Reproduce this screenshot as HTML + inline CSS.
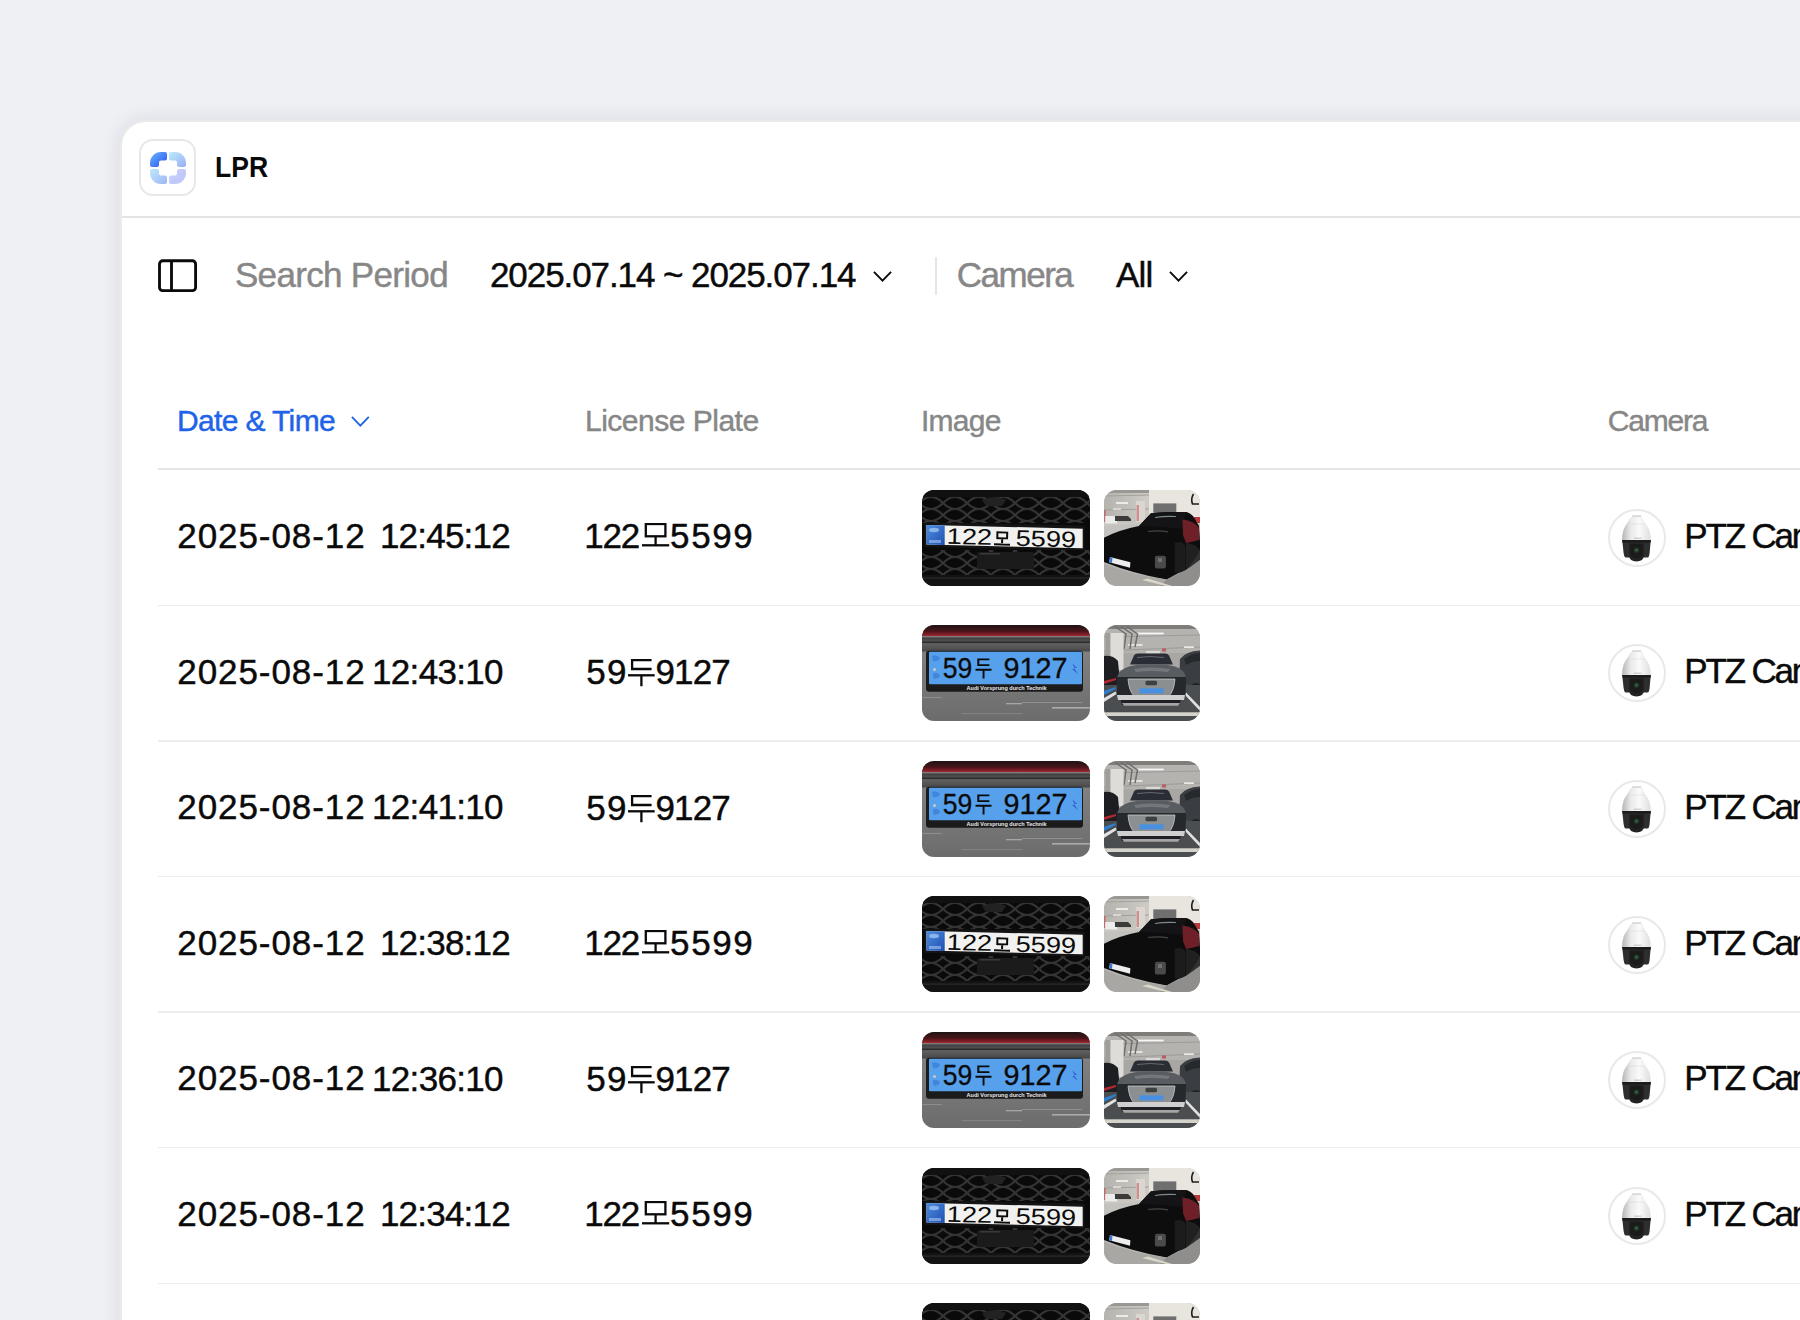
<!DOCTYPE html>
<html><head><meta charset="utf-8"><title>LPR</title>
<style>
html,body{margin:0;padding:0}
body{width:1800px;height:1320px;overflow:hidden;background:#eff0f4;position:relative;font-family:"Liberation Sans",sans-serif}
.abs{position:absolute;display:block}
.t{position:absolute;white-space:nowrap;-webkit-text-stroke:0.45px currentColor}
#win{position:absolute;left:120px;top:120px;width:1760px;height:1300px;background:#fff;border:2px solid #eaeaea;border-radius:26px;box-shadow:0 0 18px 3px rgba(20,30,60,0.075)}
.hline{position:absolute;left:122px;width:1700px;height:1.6px;background:#e4e4e4}
#logo{position:absolute;left:139.2px;top:139.2px;width:53px;height:53px;border:2px solid #e8e8e8;border-radius:14px;background:#fff}
.th{position:absolute;overflow:hidden;border-radius:12px}
.th svg{display:block}
.camc{position:absolute;left:1608px;width:54px;height:54px;border:2px solid #e9e9e9;border-radius:50%;overflow:hidden;background:#fff}
.camc svg{position:absolute;left:-2px;top:-2px}
</style></head><body>
<svg width="0" height="0" style="position:absolute"><defs>
<pattern id="hc" width="24" height="12" patternUnits="userSpaceOnUse" x="-3" y="7">
<path d="M0,6 Q6,0 12,0 Q18,0 24,6 M0,6 Q6,12 12,12 Q18,12 24,6" fill="none" stroke="#343434" stroke-width="2.1"/>
</pattern>
<linearGradient id="blueband" x1="0" y1="0" x2="1" y2="1"><stop offset="0" stop-color="#4d8ee0"/><stop offset="1" stop-color="#1f4fb0"/></linearGradient>
<linearGradient id="redtop" x1="0" y1="0" x2="0" y2="1"><stop offset="0" stop-color="#1e1213"/><stop offset="0.55" stop-color="#4a1519"/><stop offset="0.85" stop-color="#8a1f28"/><stop offset="1" stop-color="#b0303a"/></linearGradient>
<linearGradient id="bodyB" x1="0" y1="0" x2="0" y2="1"><stop offset="0" stop-color="#3a3a3a"/><stop offset="0.5" stop-color="#5f5f5f"/><stop offset="1" stop-color="#474747"/></linearGradient>
<linearGradient id="lowB" x1="0" y1="0" x2="0" y2="1"><stop offset="0" stop-color="#8a8a8a"/><stop offset="0.5" stop-color="#7a7a7a"/><stop offset="1" stop-color="#6c6c6c"/></linearGradient>
<linearGradient id="ceilA" x1="0" y1="0" x2="1" y2="0"><stop offset="0" stop-color="#b5b3ae"/><stop offset="1" stop-color="#cfccc6"/></linearGradient>
<linearGradient id="ceilB" x1="0" y1="0" x2="0" y2="1"><stop offset="0" stop-color="#8f8f8c"/><stop offset="0.5" stop-color="#c4c3bf"/><stop offset="1" stop-color="#b1b0ad"/></linearGradient>
<radialGradient id="domeg" cx="0.45" cy="0.35" r="0.7"><stop offset="0" stop-color="#ffffff"/><stop offset="0.7" stop-color="#f0f0f0"/><stop offset="1" stop-color="#c9c9c9"/></radialGradient>

<symbol id="plateA" viewBox="0 0 168 96">
<rect width="168" height="96" fill="#0a0a0a"/>
<rect y="0" width="168" height="7" fill="#111"/>
<rect y="7" width="168" height="26" fill="url(#hc)"/>
<rect y="60" width="168" height="26" fill="url(#hc)"/>
<path d="M60,10 Q72,4 84,10 L80,16 L64,16Z" fill="#222"/>
<polygon points="2.5,32.5 162.5,35.5 162.5,60.5 2.5,57" fill="#141414"/>
<polygon points="4.5,35 160.7,38.7 160.7,58.3 4.5,54.5" fill="#f1f1ef"/>
<polygon points="4.5,35 22.7,35.4 22.7,55 4.5,54.5" fill="url(#blueband)"/>
<ellipse cx="12" cy="40" rx="5" ry="2.2" fill="#9cc4f0" opacity="0.8"/>
<rect x="7" y="50" width="12" height="3" fill="#a8c6f0" opacity="0.6"/>
<g transform="rotate(1.45 4.5 35)" fill="#0b0b0b">
<text x="25" y="53.3" font-family="Liberation Sans" font-size="22.5" textLength="45.5" lengthAdjust="spacingAndGlyphs">122</text>
<path d="M74.6,39.6 H86.4 V47.2 H74.6 Z M76.6,41.4 V45.4 H84.4 V41.4 Z M79.5,47.2 H81.5 V52 H79.5 Z M72.5,51.6 H88.5 V53.6 H72.5 Z" fill-rule="evenodd"/>
<text x="94" y="53.6" font-family="Liberation Sans" font-size="22.5" textLength="60.5" lengthAdjust="spacingAndGlyphs">5599</text>
</g>
<rect x="55" y="62" width="57" height="17" rx="1.5" fill="#1b1b1b"/>
<rect x="58" y="63" width="20" height="1.5" fill="#3a3a3a"/>
<rect y="85" width="168" height="11" fill="#131313"/>
<rect y="87.5" width="168" height="1.2" fill="#2c2c2c"/>
</symbol>

<symbol id="plateB" viewBox="0 0 168 96">
<rect width="168" height="96" fill="url(#lowB)"/>
<rect y="0" width="168" height="11.5" fill="url(#redtop)"/>
<rect y="11.5" width="168" height="15" fill="url(#bodyB)"/><rect y="11.3" width="168" height="1" fill="#8e8e8e"/>
<rect y="16.5" width="168" height="1.5" fill="#2b2b2b"/>
<rect x="4" y="25.8" width="157" height="41" rx="3" fill="#1b1b1b"/>
<rect x="7" y="26.8" width="153" height="32.4" rx="1" fill="#57a0ec"/>
<path d="M10,31 q5,-2 8,2 q-2,4 -7,3z M11,48 q5,-1 7,3 q-3,4 -7,2z" fill="#3a7fd8" opacity="0.8"/>
<circle cx="12.5" cy="44.5" r="1.5" fill="#c8c8c8"/>
<path d="M150,38 l5,5 l-3,0 l4,6 l-6,-5 l3,0 z" fill="#2a63d6"/>
<g fill="#0b0b0b">
<text x="20.8" y="53.3" font-family="Liberation Sans" font-size="29" textLength="29.5" lengthAdjust="spacingAndGlyphs" stroke="#0b0b0b" stroke-width="0.3">59</text>
<path d="M55.3,33.4 H67.4 V35.2 H57.3 V39.2 H67.4 V41 H55.3 Z M53.5,43.8 H69.5 V45.7 H53.5 Z M60.6,45.7 H62.5 V53.5 H60.6 Z"/>
<text x="81.5" y="53.3" font-family="Liberation Sans" font-size="29" textLength="64" lengthAdjust="spacingAndGlyphs" stroke="#0b0b0b" stroke-width="0.3">9127</text>
</g>
<text x="44.6" y="64.8" font-family="Liberation Sans" font-size="6" font-weight="700" fill="#e8e8e8" textLength="80" lengthAdjust="spacingAndGlyphs">Audi   Vorsprung durch Technik</text>
<rect x="0" y="72" width="20" height="1" fill="#a0a0a0" opacity="0.6"/>
<rect x="84" y="78" width="16" height="1.3" fill="#bdbdbd" opacity="0.7"/>
<rect x="100" y="77" width="60" height="1" fill="#a5a5a5" opacity="0.6"/>
<rect x="130" y="82" width="38" height="1.6" fill="#c4c4c4" opacity="0.7"/>
<rect x="40" y="88" width="60" height="1.2" fill="#909090" opacity="0.6"/>
</symbol>

<symbol id="carA" viewBox="0 0 96 96">
<rect width="96" height="96" fill="#b6b5b1"/>
<rect x="0" y="0" width="46" height="34" fill="url(#ceilA)"/>
<rect x="0" y="0" width="46" height="3" fill="#9a9894"/>
<path d="M0,6 L46,5 M0,20 L46,19" stroke="#a3a19d" stroke-width="1"/>
<rect x="12" y="12.2" width="12" height="1.6" fill="#f7f7f7"/>
<rect x="9" y="18.5" width="8" height="1.2" fill="#eeeeee"/>
<rect x="45" y="0" width="51" height="32" fill="#e8e4de"/>
<rect x="32" y="11" width="9" height="22" fill="#dcd6d0"/>
<rect x="32.5" y="15" width="2.5" height="16" fill="#c87f7f" opacity="0.8"/>
<rect x="0" y="20" width="1.6" height="16" fill="#c25a5a" opacity="0.8"/>
<rect x="49.3" y="13.4" width="23" height="9.5" fill="#6f6f6f"/>
<path d="M89.5,4 Q86.5,9 88.5,14 L95,14" fill="none" stroke="#1e1e1e" stroke-width="1.6"/>
<rect x="0" y="32" width="96" height="10" fill="#cac7c2"/>
<rect x="90" y="27" width="6" height="6" fill="#b83a3e"/>
<path d="M1.2,26 h9 l3,4 v3.5 h-12z" fill="#ececec"/>
<path d="M11,26 h13 l3,3 v2 h-16z" fill="#3b3b3b"/>
<path d="M0,36 L36,34 L36,46 L0,48Z" fill="#c4c2be"/>
<path d="M0,47.7 Q14,40 35,35.9 L47,23.3 Q62,21.5 82.4,22.1 Q88,24 90.3,28 L95,36 L96,52 L96,60 Q90,72 82,80 L74.5,83 L62.7,89.5 Q30,84 0,72 Z" fill="#0d0d0d"/>
<path d="M35,35.9 L47,23.3 Q62,21.5 82.4,22.1 L78,39 Q56,36 35,35.9Z" fill="#141416"/>
<path d="M51,27.5 Q60,26 72,26.5" stroke="#9aa8ae" stroke-width="1.1" fill="none" opacity="0.8"/>
<path d="M44,41.5 Q54,40 64,41.8" stroke="#5c5c5c" stroke-width="1.2" fill="none" opacity="0.7"/>
<path d="M78.4,29.6 Q90,31 95,38 L95,50 Q88,52 82,53 L79,45 Z" fill="#6e1f27"/>
<path d="M70.6,53 Q78,50 81.6,56 L81.6,80 Q76,84 70.6,82Z" fill="#1c1c1c"/>
<path d="M82,53 Q92,54 96,60 L96,70 Q90,76 82,80Z" fill="#222" opacity="0.9"/>
<path d="M0,74 Q30,86 62.7,89.5 L56,96 L0,96Z" fill="#a9a7a3"/>
<path d="M62.7,89.5 L82,80 L96,70 L96,96 L56,96Z" fill="#8f8e8c"/>
<path d="M38,90 L62,96 L68,96 L44,88.5Z" fill="#dcd7cb"/>
<path d="M6,67 L26.4,72.2 L26,77.7 L5.2,72.2Z" fill="#ededed"/>
<path d="M6,67 L8.5,67.6 L8,73 L5.2,72.2Z" fill="#3a78d4"/>
<rect x="50.9" y="65.8" width="11" height="12.7" rx="2" fill="#4a4a4a"/>
<rect x="54" y="68" width="4" height="4" fill="#8a8a8a" opacity="0.6"/>
</symbol>

<symbol id="carB" viewBox="0 0 96 96">
<rect width="96" height="96" fill="#a8a7a3"/>
<rect width="96" height="4" fill="#7e7d7a"/>
<rect y="4" width="96" height="24" fill="#b4b3af"/>
<path d="M0,12 L96,10 M0,26 L96,22" stroke="#9a9995" stroke-width="0.9"/>
<rect x="32.7" y="7.6" width="27" height="1.8" fill="#f6f6f6"/>
<rect x="24" y="19.2" width="14.5" height="1.5" fill="#f2f2f2"/>
<rect x="80" y="21.4" width="10" height="1.5" fill="#f2f2f2"/>
<path d="M11,1.5 L22,9 L20,24 M17,1.5 L28,9 L26,24 M23,1.5 L33.5,9 L31,22" fill="none" stroke="#6d6d6b" stroke-width="1.5"/>
<rect x="1.5" y="8" width="5" height="37" fill="#9f9e9a"/>
<rect x="6.5" y="8" width="13" height="37" fill="#dedcd8"/>
<rect x="58" y="23.5" width="4" height="3" fill="#b84848" opacity="0.8"/>
<rect x="42" y="26" width="14" height="2.5" fill="#d9d9d9"/>
<path d="M0,31 Q9,30 14,36 L15.3,50 L15.3,64 L0,66Z" fill="#1c1e21"/>
<path d="M0,56 L12,53 L12,55 L0,59Z" fill="#b12a30"/>
<path d="M96,25.5 Q82,26 76,34 L75,60 L78,76.4 L96,80Z" fill="#3a3d41"/>
<path d="M80,34 Q88,28 96,28 L96,36 Q88,36 82,40Z" fill="#26292c"/>
<circle cx="92" cy="64" r="6" fill="#1e2023"/>
<rect x="0" y="60" width="96" height="36" fill="#4b4e50"/>
<path d="M0,66 L0,70 L11.6,64 L11.6,62Z" fill="#2e7fd2"/>
<path d="M0,77 L0,73 L11.6,66.5 L12.5,69Z" fill="#e2e2e2"/>
<path d="M82,67.6 L96,82 L96,86 L80.5,69.5Z" fill="#e2e2e2"/>
<rect x="0" y="87.3" width="96" height="3.7" fill="#d4d3cc"/>
<path d="M26,39.6 L30,30.5 Q31,28.6 34,28.5 L61,28.4 Q64,28.5 65,30.5 L69,39.6Z" fill="#2a2d33"/>
<path d="M33,32.5 Q46,30.5 60,32.5" stroke="#6b7078" stroke-width="0.9" fill="none"/>
<path d="M13,52.4 Q16,40 40,39.6 L56,39.6 Q80,40 82,52.4Z" fill="#595d61"/>
<path d="M30,44 Q46,41 66,44 L64,47 Q46,45 32,47Z" fill="#80848a" opacity="0.7"/>
<path d="M13,52 L82,52 L81.5,71 L13,71Z" fill="#25282c"/>
<path d="M24,54 L71,54 Q70,66 65,71 L30,71 Q25,66 24,54Z" fill="#8c8f92" stroke="#c9c9c9" stroke-width="0.8"/>
<rect x="41.5" y="55.8" width="11.5" height="4.4" rx="1.5" fill="#2a2a2a" opacity="0.8"/>
<rect x="35.3" y="63.3" width="24" height="5.1" fill="#4a90e2"/>
<path d="M13,70 L81,70 L80,75 L14,75Z" fill="#cfcfcf"/>
<path d="M16.7,75 L77,75 L75,80 L18,80Z" fill="#1e2024"/>
<path d="M18,78 L76,78 L74,80.7 L20,80.7Z" fill="#a5a5a5"/>
</symbol>

<symbol id="ptz" viewBox="0 0 58 58">
<linearGradient id="domeL" x1="0" y1="0" x2="1" y2="0"><stop offset="0" stop-color="#b5b5b5"/><stop offset="0.3" stop-color="#e9e9e9"/><stop offset="0.6" stop-color="#fafafa"/><stop offset="1" stop-color="#dedede"/></linearGradient>
<rect x="24.1" y="6.2" width="9.1" height="2.2" fill="#d9d9d9"/>
<path d="M22.9,8.1 L34.2,8.1 L37.5,15.1 Q42.3,19 42.9,31.2 L14,31.2 Q14.6,19 18.7,15.1 Z" fill="url(#domeL)"/>
<path d="M18.7,15.1 L37.5,15.1" stroke="#d5d5d5" stroke-width="0.5"/>
<path d="M14.2,31 L42.8,31 L41.6,44 Q41,48.5 39.6,48.5 L17.8,48.5 Q16.3,48.5 15.6,44 Z" fill="#2e2e2e"/>
<rect x="14.4" y="31" width="28.3" height="2.6" fill="#1c1c1c"/>
<path d="M21,34.3 L36,34.3 L36,46.5 Q35.5,52.4 28.5,52.5 Q21.5,52.4 21,46.5 Z" fill="#232323"/>
<path d="M22.5,35 L34.5,35 L34.5,45 Q34,49 28.5,49.2 Q23,49 22.5,45Z" fill="#1b1b1b"/>
<circle cx="28.5" cy="41.2" r="2.6" fill="#243a2a"/>
<circle cx="28.5" cy="41.2" r="1.1" fill="#3f6e4a"/>
<rect x="26" y="28.8" width="7.5" height="0.6" fill="#9a9a9a"/>
</symbol>
</defs>
</svg>
<div id="win"></div>
<div class="hline" style="top:216px"></div>
<div id="logo"><svg width="36" height="32" viewBox="0 0 36 32" style="position:absolute;left:8.85px;top:10.8px">
<defs>
<linearGradient id="g1" x1="0" y1="0" x2="1" y2="1"><stop offset="0" stop-color="#66bafc"/><stop offset="1" stop-color="#2e4cf2"/></linearGradient>
<linearGradient id="g2" x1="0" y1="0" x2="1" y2="1"><stop offset="0" stop-color="#bdeafb"/><stop offset="1" stop-color="#9aaef5"/></linearGradient>
<linearGradient id="g3" x1="0" y1="0" x2="1" y2="1"><stop offset="0" stop-color="#bdeafb"/><stop offset="1" stop-color="#9fb5f6"/></linearGradient>
<linearGradient id="g4" x1="0" y1="0" x2="1" y2="1"><stop offset="0" stop-color="#cad4fb"/><stop offset="1" stop-color="#bcc1fa"/></linearGradient>
</defs>
<path fill="url(#g1)" d="M0,13 V11 A11,11 0 0 1 11,0 H15 A2,2 0 0 1 17,2 V6.5 A2,2 0 0 1 15,8.5 H11 A2,2 0 0 0 9,10.5 V13 A2,2 0 0 1 7,15 H2 A2,2 0 0 1 0,13 Z"/>
<path fill="url(#g2)" d="M36,13 V11 A11,11 0 0 0 25,0 H21 A2,2 0 0 0 19,2 V6.5 A2,2 0 0 0 21,8.5 H25 A2,2 0 0 1 27,10.5 V13 A2,2 0 0 0 29,15 H34 A2,2 0 0 0 36,13 Z"/>
<path fill="url(#g3)" d="M0,19 V21 A11,11 0 0 0 11,32 H15 A2,2 0 0 0 17,30 V25.5 A2,2 0 0 0 15,23.5 H11 A2,2 0 0 1 9,21.5 V19 A2,2 0 0 0 7,17 H2 A2,2 0 0 0 0,19 Z"/>
<path fill="url(#g4)" d="M36,19 V21 A11,11 0 0 1 25,32 H21 A2,2 0 0 1 19,30 V25.5 A2,2 0 0 1 21,23.5 H25 A2,2 0 0 0 27,21.5 V19 A2,2 0 0 1 29,17 H34 A2,2 0 0 1 36,19 Z"/>
</svg></div>
<div class="t" style="left:215.38px;top:152.14px;font-size:30px;line-height:30px;color:#0a0a0a;letter-spacing:0px;font-weight:700;transform:scaleX(0.885);transform-origin:0 0;-webkit-text-stroke:0;">LPR</div>
<svg class="abs" style="left:150px;top:250px" width="56" height="50" viewBox="150 250 56 50">
<rect x="159.5" y="260.7" width="36.1" height="29.9" rx="3.2" fill="none" stroke="#0a0a0a" stroke-width="2.85"/>
<line x1="171.5" y1="260.7" x2="171.5" y2="290.6" stroke="#0a0a0a" stroke-width="2.85"/>
</svg>
<div class="t" style="left:234.96px;top:256.91px;font-size:35px;line-height:35px;color:#878787;letter-spacing:-0.679px;font-weight:400;">Search Period</div>
<div class="t" style="left:489.98px;top:256.65px;font-size:35px;line-height:35px;color:#0a0a0a;letter-spacing:-1.077px;font-weight:400;">2025.07.14 ~ 2025.07.14</div>
<svg class="abs" style="left:870px;top:268px" width="25" height="16.5" viewBox="870 268 25 16.5"><polyline points="873.95,271.95 882.5,280.55 891.05,271.95" fill="none" stroke="#0a0a0a" stroke-width="1.9"/></svg>
<div class="abs" style="left:935.3px;top:257px;width:2.2px;height:38px;background:#e6e6e6"></div>
<div class="t" style="left:956.82px;top:257.01px;font-size:35px;line-height:35px;color:#878787;letter-spacing:-1.506px;font-weight:400;">Camera</div>
<div class="t" style="left:1116.10px;top:256.59px;font-size:35px;line-height:35px;color:#0a0a0a;letter-spacing:-0.877px;font-weight:400;">All</div>
<svg class="abs" style="left:1166px;top:268px" width="25" height="16.5" viewBox="1166 268 25 16.5"><polyline points="1169.95,271.95 1178.5,280.55 1187.05,271.95" fill="none" stroke="#0a0a0a" stroke-width="1.9"/></svg>
<div class="t" style="left:176.88px;top:405.93px;font-size:30px;line-height:30px;color:#1f63e8;letter-spacing:-0.625px;font-weight:400;">Date &amp; Time</div>
<svg class="abs" style="left:348.3px;top:412.5px" width="24.7" height="16.5" viewBox="348.3 412.5 24.7 16.5"><polyline points="352.2,416.4 360.65000000000003,425.1 369.1,416.4" fill="none" stroke="#1f63e8" stroke-width="1.8"/></svg>
<div class="t" style="left:585.02px;top:406.29px;font-size:30px;line-height:30px;color:#878787;letter-spacing:-0.505px;font-weight:400;">License Plate</div>
<div class="t" style="left:921.02px;top:406.29px;font-size:30px;line-height:30px;color:#878787;letter-spacing:-0.75px;font-weight:400;">Image</div>
<div class="t" style="left:1607.64px;top:405.93px;font-size:30px;line-height:30px;color:#878787;letter-spacing:-1.155px;font-weight:400;">Camera</div>
<div class="abs" style="left:158px;top:468px;width:1700px;height:2px;background:#e6e6e6"></div>
<div class="abs" style="left:158px;top:604.55px;width:1700px;height:1.5px;background:#ededed"></div>
<div class="abs" style="left:158px;top:740.15px;width:1700px;height:1.5px;background:#ededed"></div>
<div class="abs" style="left:158px;top:875.75px;width:1700px;height:1.5px;background:#ededed"></div>
<div class="abs" style="left:158px;top:1011.35px;width:1700px;height:1.5px;background:#ededed"></div>
<div class="abs" style="left:158px;top:1146.95px;width:1700px;height:1.5px;background:#ededed"></div>
<div class="abs" style="left:158px;top:1282.55px;width:1700px;height:1.5px;background:#ededed"></div>
<div class="t" style="left:177.36px;top:518.03px;font-size:35px;line-height:35px;color:#0a0a0a;letter-spacing:0.912px;font-weight:400;">2025-08-12</div>
<div class="t" style="left:379.88px;top:518.03px;font-size:35px;line-height:35px;color:#0a0a0a;letter-spacing:-0.771px;font-weight:400;">12:45:12</div>
<div class="t" style="left:584.22px;top:518.35px;font-size:35px;line-height:35px;color:#0a0a0a;letter-spacing:-1.246px;font-weight:400;">122</div>
<svg class="abs" style="left:641.7px;top:523.00px" width="28" height="25" viewBox="0 0 28 25"><rect x="3.8" y="1" width="19.6" height="12.3" fill="none" stroke="#0a0a0a" stroke-width="2.3"/><line x1="13.6" y1="13.3" x2="13.6" y2="22.5" stroke="#0a0a0a" stroke-width="2.3"/><line x1="0" y1="22.3" x2="27.2" y2="22.3" stroke="#0a0a0a" stroke-width="2.3"/></svg>
<div class="t" style="left:670.02px;top:518.35px;font-size:35px;line-height:35px;color:#0a0a0a;letter-spacing:1.653px;font-weight:400;">5599</div>
<div class="camc" style="top:508.70px"><svg width="58" height="58" viewBox="0 0 58 58"><use href="#ptz"/></svg></div>
<div class="t" style="left:1684.36px;top:517.87px;font-size:35px;line-height:35px;color:#0a0a0a;letter-spacing:-2.2px;font-weight:400;">PTZ Camera</div>
<div class="th" style="left:921.5px;top:489.50px;width:168px;height:96px"><svg width="168" height="96" viewBox="0 0 168 96"><use href="#plateA"/></svg></div>
<div class="th" style="left:1104px;top:489.50px;width:96px;height:96px;border-radius:13px"><svg width="96" height="96" viewBox="0 0 96 96"><use href="#carA"/></svg></div>
<div class="t" style="left:177.36px;top:653.63px;font-size:35px;line-height:35px;color:#0a0a0a;letter-spacing:0.912px;font-weight:400;">2025-08-12</div>
<div class="t" style="left:372.04px;top:653.79px;font-size:35px;line-height:35px;color:#0a0a0a;letter-spacing:-0.687px;font-weight:400;">12:43:10</div>
<div class="t" style="left:586.14px;top:654.27px;font-size:35px;line-height:35px;color:#0a0a0a;letter-spacing:1.32px;font-weight:400;">59</div>
<svg class="abs" style="left:628.1px;top:659.00px" width="28" height="29" viewBox="0 0 28 29"><polyline points="23.6,1 4.1,1 4.1,10 23.6,10" fill="none" stroke="#0a0a0a" stroke-width="2.3"/><line x1="0" y1="16.3" x2="26.7" y2="16.3" stroke="#0a0a0a" stroke-width="2.3"/><line x1="13.4" y1="16.3" x2="13.4" y2="27.2" stroke="#0a0a0a" stroke-width="2.3"/></svg>
<div class="t" style="left:655.52px;top:654.27px;font-size:35px;line-height:35px;color:#0a0a0a;letter-spacing:-0.901px;font-weight:400;">9127</div>
<div class="camc" style="top:644.30px"><svg width="58" height="58" viewBox="0 0 58 58"><use href="#ptz"/></svg></div>
<div class="t" style="left:1684.36px;top:653.47px;font-size:35px;line-height:35px;color:#0a0a0a;letter-spacing:-2.2px;font-weight:400;">PTZ Camera</div>
<div class="th" style="left:921.5px;top:625.10px;width:168px;height:96px"><svg width="168" height="96" viewBox="0 0 168 96"><use href="#plateB"/></svg></div>
<div class="th" style="left:1104px;top:625.10px;width:96px;height:96px;border-radius:13px"><svg width="96" height="96" viewBox="0 0 96 96"><use href="#carB"/></svg></div>
<div class="t" style="left:177.36px;top:789.23px;font-size:35px;line-height:35px;color:#0a0a0a;letter-spacing:0.912px;font-weight:400;">2025-08-12</div>
<div class="t" style="left:372.04px;top:789.39px;font-size:35px;line-height:35px;color:#0a0a0a;letter-spacing:-0.687px;font-weight:400;">12:41:10</div>
<div class="t" style="left:586.14px;top:789.87px;font-size:35px;line-height:35px;color:#0a0a0a;letter-spacing:1.32px;font-weight:400;">59</div>
<svg class="abs" style="left:628.1px;top:794.60px" width="28" height="29" viewBox="0 0 28 29"><polyline points="23.6,1 4.1,1 4.1,10 23.6,10" fill="none" stroke="#0a0a0a" stroke-width="2.3"/><line x1="0" y1="16.3" x2="26.7" y2="16.3" stroke="#0a0a0a" stroke-width="2.3"/><line x1="13.4" y1="16.3" x2="13.4" y2="27.2" stroke="#0a0a0a" stroke-width="2.3"/></svg>
<div class="t" style="left:655.52px;top:789.87px;font-size:35px;line-height:35px;color:#0a0a0a;letter-spacing:-0.901px;font-weight:400;">9127</div>
<div class="camc" style="top:779.90px"><svg width="58" height="58" viewBox="0 0 58 58"><use href="#ptz"/></svg></div>
<div class="t" style="left:1684.36px;top:789.07px;font-size:35px;line-height:35px;color:#0a0a0a;letter-spacing:-2.2px;font-weight:400;">PTZ Camera</div>
<div class="th" style="left:921.5px;top:760.70px;width:168px;height:96px"><svg width="168" height="96" viewBox="0 0 168 96"><use href="#plateB"/></svg></div>
<div class="th" style="left:1104px;top:760.70px;width:96px;height:96px;border-radius:13px"><svg width="96" height="96" viewBox="0 0 96 96"><use href="#carB"/></svg></div>
<div class="t" style="left:177.36px;top:924.83px;font-size:35px;line-height:35px;color:#0a0a0a;letter-spacing:0.912px;font-weight:400;">2025-08-12</div>
<div class="t" style="left:379.88px;top:924.83px;font-size:35px;line-height:35px;color:#0a0a0a;letter-spacing:-0.771px;font-weight:400;">12:38:12</div>
<div class="t" style="left:584.22px;top:925.15px;font-size:35px;line-height:35px;color:#0a0a0a;letter-spacing:-1.246px;font-weight:400;">122</div>
<svg class="abs" style="left:641.7px;top:929.80px" width="28" height="25" viewBox="0 0 28 25"><rect x="3.8" y="1" width="19.6" height="12.3" fill="none" stroke="#0a0a0a" stroke-width="2.3"/><line x1="13.6" y1="13.3" x2="13.6" y2="22.5" stroke="#0a0a0a" stroke-width="2.3"/><line x1="0" y1="22.3" x2="27.2" y2="22.3" stroke="#0a0a0a" stroke-width="2.3"/></svg>
<div class="t" style="left:670.02px;top:925.15px;font-size:35px;line-height:35px;color:#0a0a0a;letter-spacing:1.653px;font-weight:400;">5599</div>
<div class="camc" style="top:915.50px"><svg width="58" height="58" viewBox="0 0 58 58"><use href="#ptz"/></svg></div>
<div class="t" style="left:1684.36px;top:924.67px;font-size:35px;line-height:35px;color:#0a0a0a;letter-spacing:-2.2px;font-weight:400;">PTZ Camera</div>
<div class="th" style="left:921.5px;top:896.30px;width:168px;height:96px"><svg width="168" height="96" viewBox="0 0 168 96"><use href="#plateA"/></svg></div>
<div class="th" style="left:1104px;top:896.30px;width:96px;height:96px;border-radius:13px"><svg width="96" height="96" viewBox="0 0 96 96"><use href="#carA"/></svg></div>
<div class="t" style="left:177.36px;top:1060.43px;font-size:35px;line-height:35px;color:#0a0a0a;letter-spacing:0.912px;font-weight:400;">2025-08-12</div>
<div class="t" style="left:372.04px;top:1060.59px;font-size:35px;line-height:35px;color:#0a0a0a;letter-spacing:-0.687px;font-weight:400;">12:36:10</div>
<div class="t" style="left:586.14px;top:1061.07px;font-size:35px;line-height:35px;color:#0a0a0a;letter-spacing:1.32px;font-weight:400;">59</div>
<svg class="abs" style="left:628.1px;top:1065.80px" width="28" height="29" viewBox="0 0 28 29"><polyline points="23.6,1 4.1,1 4.1,10 23.6,10" fill="none" stroke="#0a0a0a" stroke-width="2.3"/><line x1="0" y1="16.3" x2="26.7" y2="16.3" stroke="#0a0a0a" stroke-width="2.3"/><line x1="13.4" y1="16.3" x2="13.4" y2="27.2" stroke="#0a0a0a" stroke-width="2.3"/></svg>
<div class="t" style="left:655.52px;top:1061.07px;font-size:35px;line-height:35px;color:#0a0a0a;letter-spacing:-0.901px;font-weight:400;">9127</div>
<div class="camc" style="top:1051.10px"><svg width="58" height="58" viewBox="0 0 58 58"><use href="#ptz"/></svg></div>
<div class="t" style="left:1684.36px;top:1060.27px;font-size:35px;line-height:35px;color:#0a0a0a;letter-spacing:-2.2px;font-weight:400;">PTZ Camera</div>
<div class="th" style="left:921.5px;top:1031.90px;width:168px;height:96px"><svg width="168" height="96" viewBox="0 0 168 96"><use href="#plateB"/></svg></div>
<div class="th" style="left:1104px;top:1031.90px;width:96px;height:96px;border-radius:13px"><svg width="96" height="96" viewBox="0 0 96 96"><use href="#carB"/></svg></div>
<div class="t" style="left:177.36px;top:1196.03px;font-size:35px;line-height:35px;color:#0a0a0a;letter-spacing:0.912px;font-weight:400;">2025-08-12</div>
<div class="t" style="left:379.88px;top:1196.03px;font-size:35px;line-height:35px;color:#0a0a0a;letter-spacing:-0.771px;font-weight:400;">12:34:12</div>
<div class="t" style="left:584.22px;top:1196.35px;font-size:35px;line-height:35px;color:#0a0a0a;letter-spacing:-1.246px;font-weight:400;">122</div>
<svg class="abs" style="left:641.7px;top:1201.00px" width="28" height="25" viewBox="0 0 28 25"><rect x="3.8" y="1" width="19.6" height="12.3" fill="none" stroke="#0a0a0a" stroke-width="2.3"/><line x1="13.6" y1="13.3" x2="13.6" y2="22.5" stroke="#0a0a0a" stroke-width="2.3"/><line x1="0" y1="22.3" x2="27.2" y2="22.3" stroke="#0a0a0a" stroke-width="2.3"/></svg>
<div class="t" style="left:670.02px;top:1196.35px;font-size:35px;line-height:35px;color:#0a0a0a;letter-spacing:1.653px;font-weight:400;">5599</div>
<div class="camc" style="top:1186.70px"><svg width="58" height="58" viewBox="0 0 58 58"><use href="#ptz"/></svg></div>
<div class="t" style="left:1684.36px;top:1195.87px;font-size:35px;line-height:35px;color:#0a0a0a;letter-spacing:-2.2px;font-weight:400;">PTZ Camera</div>
<div class="th" style="left:921.5px;top:1167.50px;width:168px;height:96px"><svg width="168" height="96" viewBox="0 0 168 96"><use href="#plateA"/></svg></div>
<div class="th" style="left:1104px;top:1167.50px;width:96px;height:96px;border-radius:13px"><svg width="96" height="96" viewBox="0 0 96 96"><use href="#carA"/></svg></div>
<div class="th" style="left:921.5px;top:1303.10px;width:168px;height:96px"><svg width="168" height="96" viewBox="0 0 168 96"><use href="#plateA"/></svg></div>
<div class="th" style="left:1104px;top:1303.10px;width:96px;height:96px;border-radius:13px"><svg width="96" height="96" viewBox="0 0 96 96"><use href="#carA"/></svg></div>
</body></html>
